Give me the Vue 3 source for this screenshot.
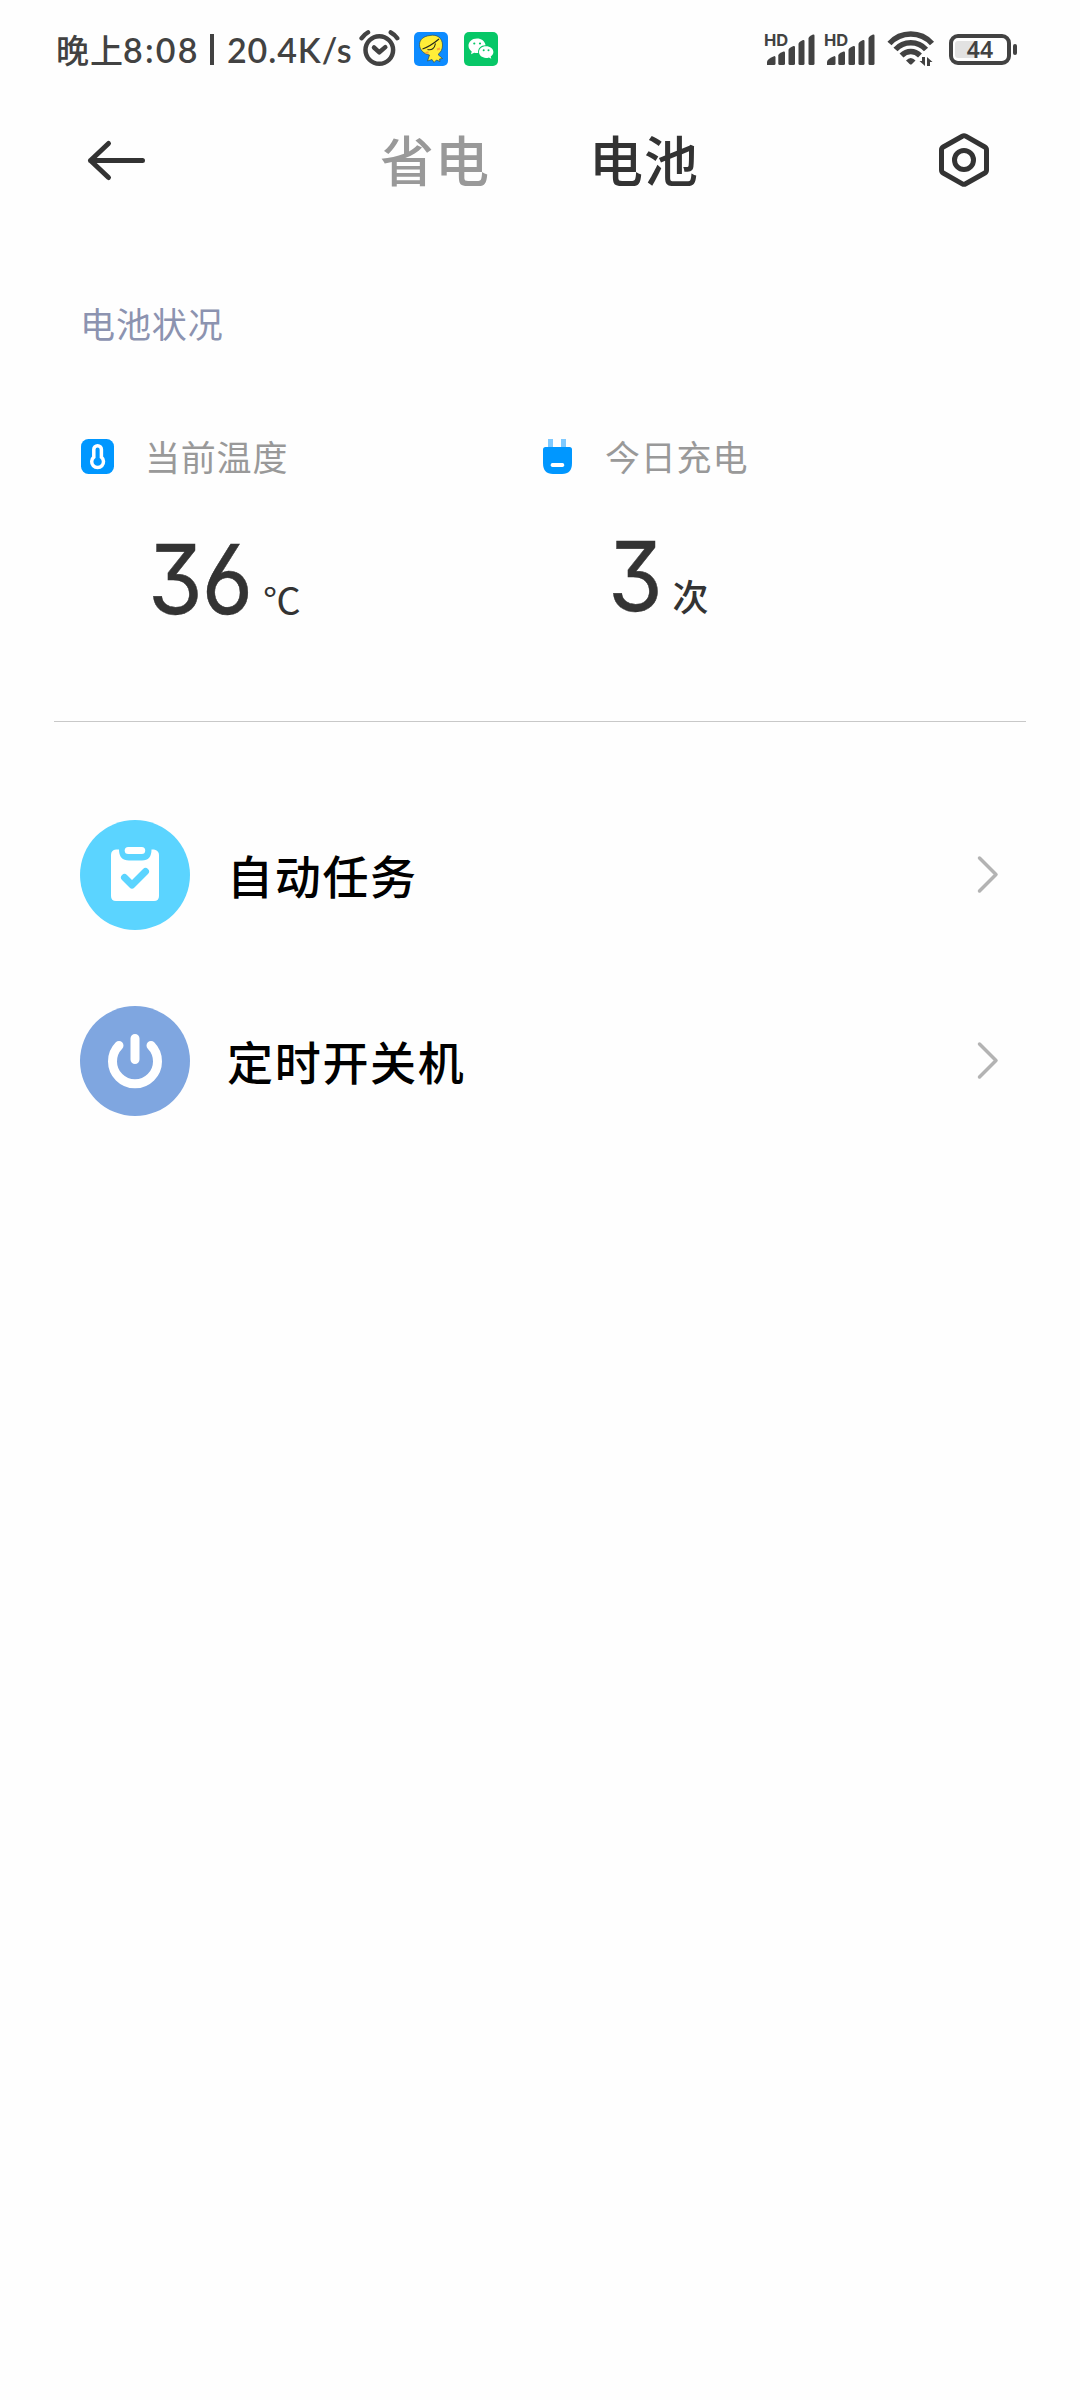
<template>
  <div class="battery-page">
    <!-- status bar -->
    <div class="status-bar">
      <div class="status-left">
        <span class="status-cjk">晚上</span>
        <span class="status-time">8:08</span>
        <span class="status-sep"></span>
        <span class="status-speed">20.4K/s</span>
        <svg class="alarm" width="42" height="40" viewBox="358 30 42 40">
          <circle cx="379.3" cy="51" r="13.8" />
          <path d="M361.6 39.2Q364 35.6 368 33.4M390.8 33.4Q395 35.6 397.2 39.2" />
          <path d="M374 48.5l5.3 4.8 6-5.2" />
        </svg>
        <svg class="app-icon duck" width="34" height="34" viewBox="0 0 34 34">
          <rect width="34" height="34" rx="5" fill="#0d8bff" />
          <path d="M16 3.500C23 2 28.500 6 28.500 13C28.500 17.500 27 20 24 22.500L28.500 26.500L25.500 27L26 29.500L22.500 28L20 30.500L18 27.500L13.500 29L15.500 23C10 22 5.500 18 5.500 12.500C5.500 7.500 10 4 16 3.500Z" fill="#ffee38" stroke="#2f4a4a" stroke-width="0.700" />
          <path d="M8.500 17Q16 14.500 25 7M13.500 17.500Q20 19 21.500 11.500" fill="none" stroke="#25271c" stroke-width="1.100" />
          <path d="M11.500 21l3-.8M23 17.500l3-1" stroke="#ffa53b" stroke-width="2" />
        </svg>
        <svg class="app-icon" width="34" height="34" viewBox="0 0 34 34">
          <rect width="34" height="34" rx="5" fill="#07c767" />
          <path d="M13 6.5C7.800 6.500 4.500 9.800 4.500 13.800C4.500 16.300 5.900 18.200 7.700 19.500L7 22.200L10.200 20.700C11.500 21.100 13 21.100 14.200 21C13.500 16.500 17 13.200 21.600 13.300C20.900 9.200 17.400 6.500 13 6.500Z" fill="#fff" />
          <path d="M22 14.300C17.700 14.300 15 16.900 15 20.100C15 23.500 18 25.900 22 25.900C23 25.900 24 25.800 24.900 25.400L27.300 26.700L26.700 24.500C28.400 23.400 29.400 21.900 29.400 20.100C29.400 16.900 26.300 14.300 22 14.300Z" fill="#fff" />
          <g fill="#07c767">
            <circle cx="10.300" cy="11.500" r="1.100" /><circle cx="16" cy="11.500" r="1.100" />
            <circle cx="19.700" cy="18.300" r="1" /><circle cx="24.500" cy="18.300" r="1" />
          </g>
        </svg>
      </div>

      <div class="status-right">
        <div v-for="n in 2" :key="n" class="signal">
          <span class="hd">HD</span>
          <svg width="50" height="34" viewBox="766 32 50 34">
            <path d="M767 65v-3q0-3 7.500-6q1 0 1 1.500v6q0 1.500-1.500 1.500z" />
            <path d="M778.300 55.500q0-2 5.200-4q1.500-.3 1.500 1.300v10.700q0 1.500-1.500 1.500h-3.700q-1.500 0-1.500-1.500z" />
            <path d="M788.500 50q0-2 5-4q1.500-.3 1.500 1.300v16.200q0 1.500-1.500 1.500h-3.500q-1.500 0-1.500-1.500z" />
            <path d="M798.500 44q0-2 4.500-4q1.500-.3 1.500 1.300v22.200q0 1.500-1.500 1.500h-3q-1.500 0-1.500-1.500z" />
            <path d="M808.500 38.500q0-2 4.500-4q1.500-.3 1.500 1.300v27.700q0 1.500-1.500 1.500h-3q-1.500 0-1.500-1.500z" />
          </svg>
        </div>
        <svg class="wifi" width="48" height="38" viewBox="887 31 48 38">
          <path class="arc" d="M889.500 44.500Q898 35 910.800 35Q923.500 35 932 44.500" />
          <path class="arc" d="M895.500 50.500Q901.500 43.700 910.800 43.700Q920 43.700 926 50.500" />
          <path class="arc" d="M901.500 56.500Q905.500 52.500 910.800 52.500Q916 52.500 920 56.500" />
          <path d="M906 61.500Q910.800 56.500 915.500 61.500L912 65Q910.800 66 909.600 65Z" />
          <path d="M922 58h3v9l-5.500-5h2.500zM927 67v-9l5.500 5H930v4z" />
        </svg>
        <div class="battery">
          <div class="battery-body">
            <div class="battery-level" :style="{ width: level + '%' }"></div>
            <span class="battery-num">{{ level }}</span>
          </div>
          <div class="battery-cap"></div>
        </div>
      </div>
    </div>

    <!-- header -->
    <div class="header">
      <svg class="back" width="60" height="44" viewBox="86 138 60 44">
        <path d="M108.500 143.500L90.500 160.500L108.500 177.500M90.500 160.500H142.500" />
      </svg>
      <div class="tabs">
        <span
          v-for="t in tabs"
          :key="t"
          class="tab"
          :class="{ active: t === currentTab }"
          @click="currentTab = t"
        >{{ t }}</span>
      </div>
      <svg class="settings" width="52" height="56" viewBox="938 132 52 56">
        <path d="M962.300 136.200Q964 135.200 965.700 136.200L984.800 147Q986.500 148 986.500 150V170Q986.500 172 984.800 173L965.700 183.800Q964 184.800 962.300 183.800L943.200 173Q941.500 172 941.500 170V150Q941.500 148 943.200 147Z" />
        <circle cx="964" cy="160" r="9.500" />
      </svg>
    </div>

    <div class="section-title">电池状况</div>

    <div class="stats">
      <div class="stat">
        <div class="stat-head">
          <svg width="34" height="36" viewBox="0 0 34 36">
            <rect y="1" width="33" height="35" rx="7.500" fill="#0097ff" />
            <path d="M12.800 11.500a3.800 3.800 0 0 1 7.600 0v7.700a5.900 5.900 0 1 1-7.600 0z" fill="none" stroke="#fff" stroke-width="3.500" />
          </svg>
          <span>当前温度</span>
        </div>
        <div class="stat-value">
          <span class="num">36</span>
          <span class="unit celsius">℃</span>
        </div>
      </div>
      <div class="stat">
        <div class="stat-head">
          <svg width="34" height="36" viewBox="1 0 34 36">
            <path d="M8 1h5v9H8zM21 1h5v9h-5z" fill="#80caff" />
            <path d="M5.500 9H29.500Q32 9 32 11.500V25Q32 36 22 36H13Q3 36 3 25V11.500Q3 9 5.500 9Z" fill="#0097ff" />
            <rect x="10.700" y="25" width="13.500" height="4" rx="1.700" fill="#fff" />
          </svg>
          <span>今日充电</span>
        </div>
        <div class="stat-value second">
          <span class="num">3</span>
          <span class="unit">次</span>
        </div>
      </div>
    </div>

    <div class="divider"></div>

    <div class="menu">
      <div class="menu-item">
        <svg class="menu-icon" width="110" height="110" viewBox="0 0 110 110">
          <circle cx="55" cy="55" r="55" fill="#5bd4ff" />
          <path d="M36 29.500H39Q39 40.500 49 40.500H62Q71.500 40.500 71.500 29.500H74Q79 30.500 79 35V76Q79 81 74 81H36Q31 81 31 76V35Q31 30 36 29.500Z" fill="#fff" />
          <rect x="44.700" y="27" width="20.500" height="7" rx="3.500" fill="#fff" />
          <path d="M44.500 57.500L52 65L65.500 51.500" fill="none" stroke="#5bd4ff" stroke-width="7" stroke-linecap="round" stroke-linejoin="round" />
        </svg>
        <span class="menu-text">自动任务</span>
        <svg class="arrow" width="24" height="40" viewBox="0 0 24 40">
          <path d="M3.500 3L20 19.500L3.500 36" />
        </svg>
      </div>
      <div class="menu-item">
        <svg class="menu-icon" width="110" height="110" viewBox="0 0 110 110">
          <circle cx="55" cy="55" r="55" fill="#7fa6e0" />
          <path d="M39 39.500A22.500 22.500 0 1 0 71 39.500M55 32.500V53.500" fill="none" stroke="#fff" stroke-width="9" stroke-linecap="round" />
        </svg>
        <span class="menu-text">定时开关机</span>
        <svg class="arrow" width="24" height="40" viewBox="0 0 24 40">
          <path d="M3.500 3L20 19.500L3.500 36" />
        </svg>
      </div>
    </div>
  </div>
</template>

<script setup>
import { ref } from 'vue'

const tabs = ['省电', '电池']
const currentTab = ref('电池')
const level = ref(44)
</script>

<style>
body {
  background: #fefefe;
}
</style>

<style scoped>
.battery-page {
  width: 1080px;
  height: 2400px;
  overflow: hidden;
  background: #fefefe;
  color: #333;
  font-family: "Noto Sans CJK SC", sans-serif;
}
svg {
  display: block;
  flex: none;
}
span {
  white-space: nowrap;
}

/* status bar */
.status-bar {
  display: flex;
  justify-content: space-between;
  height: 98px;
  padding: 0 63px 0 56px;
  color: #424242;
}
.status-left,
.status-right {
  display: flex;
  align-items: center;
  height: 98px;
}
.status-cjk {
  width: 67px;
  font-size: 33px;
  font-weight: 500;
  letter-spacing: 1px;
}
.status-time,
.status-speed {
  font-family: Lato, sans-serif;
  font-size: 34px;
  font-weight: 600;
  letter-spacing: 0.9px;
}
.status-time {
  width: 87px;
  letter-spacing: 2.2px;
}
.status-sep {
  width: 4px;
  height: 31px;
  background: #424242;
}
.status-speed {
  width: 126px;
  margin-left: 13px;
}
.alarm {
  margin-left: 5px;
  fill: none;
  stroke: #424242;
  stroke-width: 4.5;
  stroke-linecap: round;
  stroke-linejoin: round;
}
.app-icon {
  margin-left: 16px;
}
.app-icon.duck {
  margin-left: 14px;
}
.signal {
  position: relative;
  width: 50px;
  margin-right: 10px;
  fill: #424242;
}
.hd {
  position: absolute;
  left: -2px;
  top: 0;
  font-family: Inter, sans-serif;
  font-size: 16.5px;
  font-weight: 700;
  line-height: 16px;
}
.wifi {
  margin-left: 1px;
  fill: #424242;
}
.wifi .arc {
  fill: none;
  stroke: #424242;
  stroke-width: 5.5;
}
.battery {
  display: flex;
  align-items: center;
  margin-left: 14px;
}
.battery-body {
  box-sizing: border-box;
  display: grid;
  align-items: center;
  width: 62px;
  height: 31px;
  padding: 2px;
  border: 4.5px solid #424242;
  border-radius: 9px;
}
.battery-level {
  grid-area: 1 / 1;
  height: 17px;
  border-radius: 3px;
  background: #e2e2e2;
}
.battery-num {
  grid-area: 1 / 1;
  text-align: center;
  font-family: "Noto Sans", sans-serif;
  font-size: 23px;
  font-weight: 600;
  line-height: 18px;
}
.battery-cap {
  width: 4px;
  height: 11px;
  margin-left: 2px;
  border-radius: 2px;
  background: #424242;
}

/* header */
.header {
  display: flex;
  align-items: center;
  height: 124px;
  padding: 0 90px 0 86px;
}
.back {
  fill: none;
  stroke: #333;
  stroke-width: 5;
  stroke-linecap: round;
  stroke-linejoin: round;
}
.tabs {
  display: flex;
  flex: 1;
  gap: 99px;
  padding: 0 0 2px 234px;
}
.tab {
  font-size: 54px;
  font-weight: 500;
  letter-spacing: 1px;
  line-height: 80px;
  color: #999;
}
.tab.active {
  color: #333;
}
.settings {
  fill: none;
  stroke: #333;
  stroke-width: 5;
}

.section-title {
  padding: 74px 0 0 80px;
  font-size: 35px;
  letter-spacing: 0.9px;
  line-height: 54px;
  color: #8c93b0;
}

/* stats */
.stats {
  display: flex;
  padding: 79px 0 0 81px;
}
.stat {
  width: 460px;
}
.stat-head {
  display: flex;
  align-items: center;
  gap: 30px;
  height: 54px;
  font-size: 35px;
  letter-spacing: 0.8px;
  color: #999;
}
.stat-head span {
  padding-bottom: 2px;
}
.stat-value {
  display: flex;
  align-items: baseline;
  height: 110px;
  margin-top: 41px;
  padding-left: 67px;
}
.stat-value.second {
  margin-top: 38px;
}
.num {
  font-family: Inter, sans-serif;
  font-size: 96px;
  font-weight: 400;
  line-height: 110px;
  letter-spacing: -1px;
  font-feature-settings: "cv03", "cv09";
  -webkit-text-stroke: 0.5px #333;
  transform: scaleX(0.92);
  transform-origin: left;
}
.unit {
  margin-left: 6px;
  font-size: 36px;
  font-weight: 500;
  line-height: 50px;
}
.unit.celsius {
  margin-left: 2px;
  font-size: 35px;
  font-weight: 400;
  transform: scaleX(1.08);
  transform-origin: left;
}

.divider {
  height: 1px;
  margin: 87px 54px 0;
  background: #c8c8c8;
}

/* menu */
.menu {
  padding: 98px 80px 0 80px;
}
.menu-item {
  display: flex;
  align-items: center;
  height: 110px;
  margin-bottom: 76px;
}
.menu-text {
  flex: 1;
  margin-left: 37px;
  padding-bottom: 3px;
  font-size: 46px;
  font-weight: 500;
  letter-spacing: 1.7px;
  color: #000;
}
.arrow {
  fill: none;
  stroke: #b3b3b3;
  stroke-width: 3.5;
  stroke-linecap: round;
  stroke-linejoin: round;
}
</style>
